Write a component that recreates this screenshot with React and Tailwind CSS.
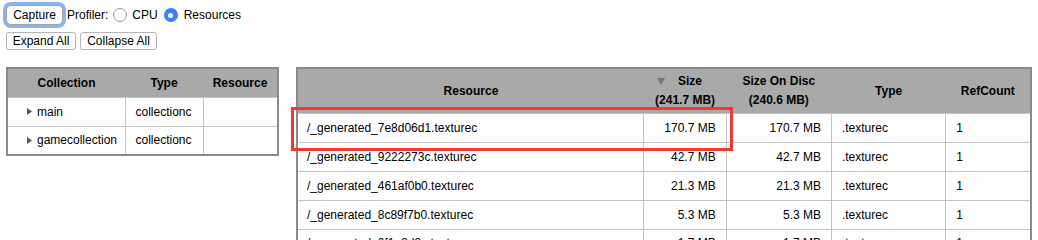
import React from "react";

const leftRows = [
  { name: "main", type: "collectionc" },
  { name: "gamecollection", type: "collectionc" },
];

const rightRows = [
  ["/_generated_7e8d06d1.texturec", "170.7 MB", "170.7 MB", ".texturec", "1"],
  ["/_generated_9222273c.texturec", "42.7 MB", "42.7 MB", ".texturec", "1"],
  ["/_generated_461af0b0.texturec", "21.3 MB", "21.3 MB", ".texturec", "1"],
  ["/_generated_8c89f7b0.texturec", "5.3 MB", "5.3 MB", ".texturec", "1"],
  ["/_generated_0f1e2d3c.texturec", "1.7 MB", "1.7 MB", ".texturec", "1"],
];

function Radio({ checked }) {
  return checked ? (
    <span className="inline-flex h-[14px] w-[14px] items-center justify-center rounded-full bg-[#3b82f6]">
      <span className="h-[5px] w-[5px] rounded-full bg-white" />
    </span>
  ) : (
    <span className="inline-block h-[14px] w-[14px] rounded-full border border-[#9a9a9a] bg-white" />
  );
}

export default function App() {
  return (
    <div
      className="relative h-[240px] w-[1038px] overflow-hidden bg-white text-[12px] text-black"
      style={{ fontFamily: '"Liberation Sans", Arial, Helvetica, sans-serif' }}
    >
      <div className="flex items-center pl-[6px] pt-[5px]">
        <button className="h-[20px] w-[57px] rounded-[5px] border border-[#a6a6a6] bg-white text-[12px] leading-none shadow-[0_0_0_3px_#8ab4f0]">
          Capture
        </button>
        <span className="ml-[4px]">Profiler:</span>
        <span className="ml-[5px] flex items-center">
          <Radio />
        </span>
        <span className="ml-[5px]">CPU</span>
        <span className="ml-[6px] flex items-center">
          <Radio checked />
        </span>
        <span className="ml-[6px]">Resources</span>
      </div>
      <div className="mt-[7px] flex gap-[4px] pl-[6px]">
        <button className="h-[18px] w-[70px] rounded-[3px] border border-[#b5b5b5] bg-white text-[12px] leading-none">
          Expand All
        </button>
        <button className="h-[18px] w-[77px] rounded-[3px] border border-[#b5b5b5] bg-white text-[12px] leading-none">
          Collapse All
        </button>
      </div>

      <div className="mt-[17px] flex items-start pl-[6px]">
        <table className="w-[273px] table-fixed border-collapse border-[2px] border-[#8a8a8a]">
          <colgroup>
            <col className="w-[118px]" />
            <col className="w-[78px]" />
            <col className="w-[75px]" />
          </colgroup>
          <thead>
            <tr className="h-[29px] bg-[#a9a9a9] font-bold">
              <th className="text-center">Collection</th>
              <th className="text-center">Type</th>
              <th className="text-center">Resource</th>
            </tr>
          </thead>
          <tbody>
            {leftRows.map((r) => (
              <tr key={r.name} className="h-[29px]">
                <td className="border border-[#c4c4c4] pl-[19px]">
                  <span className="flex items-center">
                    <svg width="5" height="7" viewBox="0 0 5 7" className="mr-[5px]">
                      <path d="M0 0 L5 3.5 L0 7 Z" fill="#555" />
                    </svg>
                    {r.name}
                  </span>
                </td>
                <td className="border border-[#c4c4c4] pl-[10px]">{r.type}</td>
                <td className="border border-[#c4c4c4]" />
              </tr>
            ))}
          </tbody>
        </table>

        <table className="ml-[17px] w-[736px] table-fixed border-collapse border-[2px] border-[#8a8a8a]">
          <colgroup>
            <col className="w-[346px]" />
            <col className="w-[82px]" />
            <col className="w-[105px]" />
            <col className="w-[114px]" />
            <col className="w-[85px]" />
          </colgroup>
          <thead>
            <tr className="h-[45px] bg-[#a9a9a9] font-bold leading-[16px]">
              <th className="text-center">Resource</th>
              <th className="relative text-center">
                <svg
                  width="8"
                  height="7"
                  viewBox="0 0 8 7"
                  className="absolute left-[13px] top-[9px]"
                >
                  <path d="M0 0 L8 0 L4 7 Z" fill="#777" />
                </svg>
                <div className="pl-[10px]">Size</div>
                <div className="mt-[3px]">(241.7 MB)</div>
              </th>
              <th className="text-center">
                <div>Size On Disc</div>
                <div className="mt-[3px]">(240.6 MB)</div>
              </th>
              <th className="text-center">Type</th>
              <th className="text-center">RefCount</th>
            </tr>
          </thead>
          <tbody>
            {rightRows.map((r) => (
              <tr key={r[0]} className="h-[29px]">
                <td className="border border-[#c4c4c4] pl-[9px]">{r[0]}</td>
                <td className="border border-[#c4c4c4] pr-[10px] text-right">{r[1]}</td>
                <td className="border border-[#c4c4c4] pr-[10px] text-right">{r[2]}</td>
                <td className="border border-[#c4c4c4] pl-[10px]">{r[3]}</td>
                <td className="border border-[#c4c4c4] pl-[10px]">{r[4]}</td>
              </tr>
            ))}
          </tbody>
        </table>
      </div>

      <div className="pointer-events-none absolute left-[291px] top-[107px] h-[44px] w-[442px] border-[3px] border-[#f33a2c]" />
    </div>
  );
}
